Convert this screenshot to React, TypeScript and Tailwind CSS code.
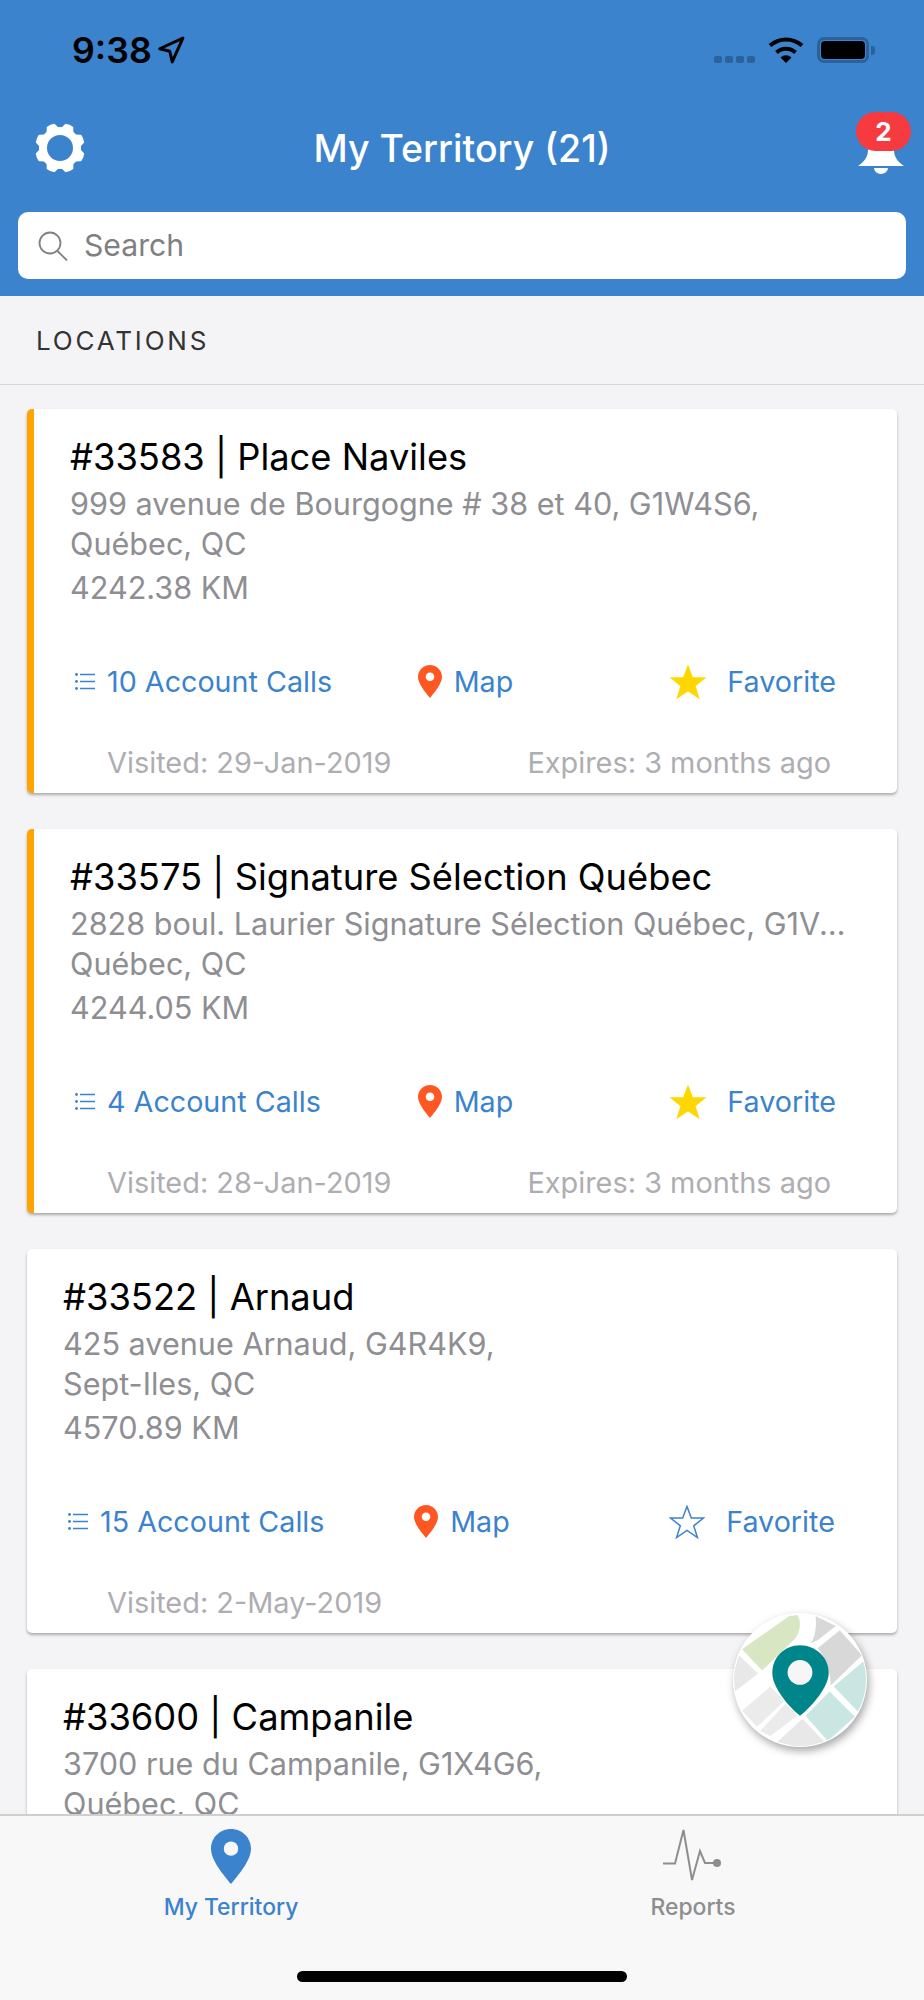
const sans = 'font-["Inter","Liberation_Sans",sans-serif]';

type Location = {
  title: string;
  street: string;
  city: string;
  distance: string;
  calls: string;
  visited: string;
  expires?: string;
  favorite: boolean;
};

const locations: Location[] = [
  {
    title: '#33583 | Place Naviles',
    street: '999 avenue de Bourgogne # 38 et 40, G1W4S6,',
    city: 'Québec, QC',
    distance: '4242.38 KM',
    calls: '10 Account Calls',
    visited: 'Visited: 29-Jan-2019',
    expires: 'Expires: 3 months ago',
    favorite: true,
  },
  {
    title: '#33575 | Signature Sélection Québec',
    street: '2828 boul. Laurier Signature Sélection Québec, G1V4Y2,',
    city: 'Québec, QC',
    distance: '4244.05 KM',
    calls: '4 Account Calls',
    visited: 'Visited: 28-Jan-2019',
    expires: 'Expires: 3 months ago',
    favorite: true,
  },
  {
    title: '#33522 | Arnaud',
    street: '425 avenue Arnaud, G4R4K9,',
    city: 'Sept-Iles, QC',
    distance: '4570.89 KM',
    calls: '15 Account Calls',
    visited: 'Visited: 2-May-2019',
    favorite: false,
  },
  {
    title: '#33600 | Campanile',
    street: '3700 rue du Campanile, G1X4G6,',
    city: 'Québec, QC',
    distance: '4312.11 KM',
    calls: '7 Account Calls',
    visited: 'Visited: 2-May-2019',
    favorite: false,
  },
];

const gearAngles = [22.5, 67.5, 112.5, 157.5, 202.5, 247.5, 292.5, 337.5];

function Gear() {
  return (
    <svg viewBox="0 0 52 52" className="absolute left-[34px] top-[22px] h-[52px] w-[52px]">
      <circle cx="26" cy="26" r="17" fill="none" stroke="white" strokeWidth="8" />
      {gearAngles.map((angle) => (
        <path key={angle} d="M18.500 9 21.800 1.500Q26 .2 30.200 1.500L33.500 9Z" fill="white" transform={`rotate(${angle} 26 26)`} />
      ))}
    </svg>
  );
}

function Pin({ className, hole = 'white' }: { className: string; hole?: string }) {
  return (
    <svg viewBox="0 0 24 33" className={className}>
      <path fill="currentColor" d="M12 0C5.400 0 0 5.200 0 11.800 0 19 8 28 12 33c4-5 12-14 12-21.200C24 5.200 18.600 0 12 0Z" />
      <circle cx="12" cy="11.800" r="4.300" fill={hole} />
    </svg>
  );
}

function StarIcon({ filled }: { filled: boolean }) {
  return (
    <svg viewBox="0 0 36 34" className="h-[34px] w-[36px]">
      <path
        d="M18 1.500 22.300 13H34.500L24.700 20.800 28.400 32.500 18 25.400 7.600 32.500 11.300 20.800 1.500 13H13.700Z"
        fill={filled ? '#ffd700' : 'none'}
        stroke={filled ? '#ffd700' : '#3b83cc'}
        strokeWidth="1.500"
      />
    </svg>
  );
}

function ListIcon() {
  return (
    <svg viewBox="0 0 20 17" className="h-[17px] w-[20px] shrink-0">
      <circle cx="1.500" cy="1.500" r="1.400" fill="#3b83cc" />
      <circle cx="1.500" cy="8.500" r="1.400" fill="#3b83cc" />
      <circle cx="1.500" cy="15.500" r="1.400" fill="#3b83cc" />
      <path d="M5 1.500h15M5 8.500h15M5 15.500h15" stroke="#3b83cc" strokeWidth="1.400" />
    </svg>
  );
}

function LocationCard({ location }: { location: Location }) {
  const flagged = location.expires !== undefined;
  return (
    <div className={`h-[384px] shrink-0 overflow-hidden rounded-[5px] bg-white shadow-[0_2px_3px_rgba(0,0,0,0.3)] ${flagged ? 'border-l-[7px] border-[#ffa400]' : ''}`}>
      <div className="pl-[36px] pr-[50px] pt-[25px]">
        <div className="text-[36.300px] leading-[46px] text-black">{location.title}</div>
        <div className="mt-[4px] truncate text-[30.600px] leading-[40px] text-[#8e8e93]">{location.street}</div>
        <div className="text-[30.600px] leading-[40px] text-[#8e8e93]">{location.city}</div>
        <div className="mt-[4px] text-[30.600px] leading-[40px] text-[#8e8e93]">{location.distance}</div>
      </div>
      <div className="mt-[52px] grid h-[40px] grid-cols-3 items-center text-[28.700px] text-[#3b83cc]">
        <div className="flex min-w-0 items-center pl-[41px]">
          <ListIcon />
          <span className="ml-[12px] whitespace-nowrap">{location.calls}</span>
        </div>
        <div className="flex min-w-0 items-center justify-center">
          <Pin className="h-[33px] w-[24px] text-[#ff5722]" />
          <span className="ml-[12px]">Map</span>
        </div>
        <div className="flex min-w-0 items-center justify-center">
          <StarIcon filled={location.favorite} />
          <span className="ml-[21px]">Favorite</span>
        </div>
      </div>
      <div className={`mt-[43px] flex h-[40px] items-center justify-between text-[28.900px] text-[#aeaeb2] ${flagged ? 'pl-[73px] pr-[66px]' : 'pl-[80px] pr-[73px]'}`}>
        <span>{location.visited}</span>
        {location.expires && <span>{location.expires}</span>}
      </div>
    </div>
  );
}

export default function App() {
  return (
    <div className={`relative flex h-[2000px] w-[924px] flex-col overflow-hidden bg-[#f4f4f6] ${sans}`}>
      <div className="h-[296px] shrink-0 bg-[#3b83cc]">
        <div className="flex h-[100px] items-start justify-between pl-[72px] pr-[49px] pt-[29px]">
          <div className="flex items-center gap-[4px]">
            <span className="text-[35.700px] font-semibold leading-[42px] text-black">9:38</span>
            <svg viewBox="0 0 24 24" className="h-[30px] w-[30px]">
              <path d="M21.500 2.500 3 11l8 2 2 8.500 8.500-19Z" fill="none" stroke="black" strokeWidth="2.400" strokeLinejoin="round" />
            </svg>
          </div>
          <div className="flex items-center gap-[13px] pt-[8px]">
            <div className="mt-[19px] flex gap-[3px]">
              <span className="h-[7px] w-[8px] rounded-[2px] bg-[#2b629b]" />
              <span className="h-[7px] w-[8px] rounded-[2px] bg-[#2b629b]" />
              <span className="h-[7px] w-[8px] rounded-[2px] bg-[#2b629b]" />
              <span className="h-[7px] w-[8px] rounded-[2px] bg-[#2b629b]" />
            </div>
            <svg viewBox="0 0 36 26" className="h-[26px] w-[36px]">
              <path d="M12.500 20.500A8 8 0 0 1 23.500 20.500L18 26Z" fill="black" />
              <path d="M8.500 15.500A14 14 0 0 1 27.500 15.500" fill="none" stroke="black" strokeWidth="4" />
              <path d="M2 8.500A24 24 0 0 1 34 8.500" fill="none" stroke="black" strokeWidth="4" />
            </svg>
            <div className="flex items-center">
              <div className="h-[26px] w-[52px] rounded-[7px] border-[3px] border-[#2b629b] p-[1px]">
                <div className="h-full w-full rounded-[4px] bg-black" />
              </div>
              <div className="ml-[2px] h-[9px] w-[4px] rounded-r-[3px] bg-[#2b629b]" />
            </div>
          </div>
        </div>
        <div className="relative flex h-[112px] items-center justify-center">
          <Gear />
          <span className="pb-[15px] text-[37.500px] font-medium leading-[48px] text-white">My Territory (21)</span>
          <svg viewBox="0 0 48 40" className="absolute left-[857px] top-[34px] h-[40px] w-[48px]">
            <path d="M24 0C14 0 11 8 11 16c0 7-4 12-10 16h46c-6-4-10-9-10-16 0-8-3-16-13-16Z" fill="white" />
            <path d="M17 34h14a7 6 0 0 1-14 0Z" fill="white" />
          </svg>
          <div className="absolute left-[856px] top-[12px] flex h-[39px] w-[55px] items-center justify-center rounded-[20px] bg-[#f53b3f] text-[26px] font-bold text-white">2</div>
        </div>
        <div className="mx-[18px] flex h-[67px] items-center rounded-[10px] bg-white">
          <svg viewBox="0 0 30 30" className="ml-[20px] h-[30px] w-[30px] shrink-0">
            <circle cx="12" cy="12" r="10.500" fill="none" stroke="#808080" strokeWidth="1.800" />
            <path d="M19.500 20 29 29.500" stroke="#808080" strokeWidth="1.800" />
          </svg>
          <span className="ml-[16px] text-[30.200px] text-[#808080]">Search</span>
        </div>
      </div>
      <div className="flex h-[89px] shrink-0 items-center border-b border-[#d4d4d8] pl-[36px] text-[26px] font-normal tracking-[2.800px] text-[#333333]">
        LOCATIONS
      </div>
      <div className="flex flex-1 flex-col gap-[36px] overflow-hidden px-[27px] pt-[24px]">
        {locations.map((location) => (
          <LocationCard key={location.title} location={location} />
        ))}
      </div>
      <div className="relative h-[186px] shrink-0 border-t-2 border-[#cfcfcf] bg-[#f8f8f8]">
        <div className="flex pt-[13px]">
          <div className="flex w-[462px] flex-col items-center text-[#3b83cc]">
            <Pin className="h-[55px] w-[40px]" hole="#f8f8f8" />
            <span className="mt-[9px] text-[22.900px] font-medium leading-[28px]">My Territory</span>
          </div>
          <div className="flex w-[462px] flex-col items-center text-[#8e8e8e]">
            <svg viewBox="0 0 60 54" className="h-[54px] w-[60px]">
              <path d="M0 34.500h12L20.500 1 29 51l8-29 5 12h12" fill="none" stroke="currentColor" strokeWidth="2" />
              <circle cx="54" cy="34" r="4" fill="currentColor" />
            </svg>
            <span className="mt-[10px] text-[22.900px] font-medium leading-[28px]">Reports</span>
          </div>
        </div>
        <div className="absolute bottom-[18px] left-[297px] h-[11px] w-[330px] rounded-full bg-black" />
      </div>
      <svg viewBox="0 0 133 133" className="absolute left-[733px] top-[1613px] h-[134px] w-[134px] rounded-full bg-white shadow-[2px_4px_8px_rgba(0,0,0,0.35)]">
        <defs>
          <clipPath id="fab">
            <circle cx="66.500" cy="66.500" r="65.500" />
          </clipPath>
        </defs>
        <g clipPath="url(#fab)">
          <rect width="133" height="133" fill="#ffffff" />
          <path d="M9 36 56 3 64 2C67 8 68 16 62 25L29 57Z" fill="#d8e6c4" />
          <path d="M6 42 25 60 2 78 0 60Z" fill="#e8e8e8" />
          <path d="M82 3 102 13 84 27 77 30C82 24 83 12 82 3Z" fill="#d8d8d8" />
          <path d="M106 17 128 42 97 72C97 58 92 44 84 35Z" fill="#d8d8d8" />
          <path d="M133 45 134 80 124 98 100 73Z" fill="#c9e6e3" />
          <path d="M96 78 121 103 94 127 72 102Z" fill="#c9e6e3" />
          <path d="M37 73 51 87 24 113 9 97Z" fill="#ebebeb" />
          <path d="M52 90 64 102 37 122 27 117Z" fill="#ebebeb" />
          <path d="M69 105 91 128 71 135 44 128Z" fill="#e8e8e8" />
        </g>
        <path d="M66.500 32C51 32 39 44 39 59.500 39 73 54 92 66.500 102 79 92 95 73 95 59.500 95 44 82 32 66.500 32Z" fill="#00858a" />
        <circle cx="66.500" cy="59" r="12.300" fill="#f6f6f6" />
      </svg>
    </div>
  );
}
